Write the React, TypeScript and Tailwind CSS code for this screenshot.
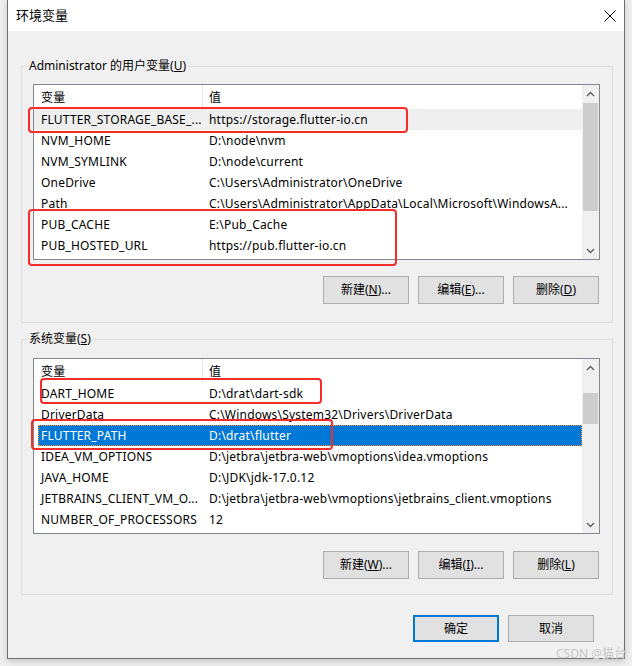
import React from "react";

type Row = { name: string; value: string };

const userRows: Row[] = [
  { name: "FLUTTER_STORAGE_BASE_...", value: "https://storage.flutter-io.cn" },
  { name: "NVM_HOME", value: "D:\\node\\nvm" },
  { name: "NVM_SYMLINK", value: "D:\\node\\current" },
  { name: "OneDrive", value: "C:\\Users\\Administrator\\OneDrive" },
  { name: "Path", value: "C:\\Users\\Administrator\\AppData\\Local\\Microsoft\\WindowsA..." },
  { name: "PUB_CACHE", value: "E:\\Pub_Cache" },
  { name: "PUB_HOSTED_URL", value: "https://pub.flutter-io.cn" },
];

const sysRows: Row[] = [
  { name: "DART_HOME", value: "D:\\drat\\dart-sdk" },
  { name: "DriverData", value: "C:\\Windows\\System32\\Drivers\\DriverData" },
  { name: "FLUTTER_PATH", value: "D:\\drat\\flutter" },
  { name: "IDEA_VM_OPTIONS", value: "D:\\jetbra\\jetbra-web\\vmoptions\\idea.vmoptions" },
  { name: "JAVA_HOME", value: "D:\\JDK\\jdk-17.0.12" },
  { name: "JETBRAINS_CLIENT_VM_O...", value: "D:\\jetbra\\jetbra-web\\vmoptions\\jetbrains_client.vmoptions" },
  { name: "NUMBER_OF_PROCESSORS", value: "12" },
];

function ArrowUp() {
  return (
    <svg width="9" height="6" viewBox="0 0 9 6">
      <polyline points="1,5 4.5,1.5 8,5" fill="none" stroke="#606060" strokeWidth="1.4" />
    </svg>
  );
}
function ArrowDown() {
  return (
    <svg width="9" height="6" viewBox="0 0 9 6">
      <polyline points="1,1 4.5,4.5 8,1" fill="none" stroke="#606060" strokeWidth="1.4" />
    </svg>
  );
}

function ListBox({
  rows,
  hover,
  selected,
  thumbTop,
  thumbHeight,
}: {
  rows: Row[];
  hover?: number;
  selected?: number;
  thumbTop: number;
  thumbHeight: number;
}) {
  return (
    <div className="flex h-[176px] w-[567px] border border-[#828790] bg-white">
      <div className="flex flex-1 flex-col overflow-hidden tracking-[0.2px]">
        <div className="flex h-[24px] items-center">
          <div className="h-full w-[169px] border-r border-[#e5e5e5] pl-[7px] pt-[1px] leading-[24px]">变量</div>
          <div className="h-full pl-[6px] pt-[1px] leading-[24px]">值</div>
        </div>
        {rows.map((r, i) => {
          const isSel = i === selected;
          const isHover = i === hover;
          return (
            <div
              key={r.name}
              className={
                "flex h-[21px] items-center whitespace-nowrap pt-[1px] " +
                (isSel
                  ? "ml-[4px] border border-dotted border-[#ff8c2a] bg-[#0078d7] text-white"
                  : isHover
                  ? "bg-[#efefef]"
                  : "")
              }
            >
              <div className={isSel ? "w-[164px] pl-[2px]" : "w-[169px] pl-[7px]"}>{r.name}</div>
              <div className="pl-[6px]">{r.value}</div>
            </div>
          );
        })}
      </div>
      <div className="flex w-[17px] flex-col bg-[#f0f0f0]">
        <div className="flex h-[17px] items-center justify-center">
          <ArrowUp />
        </div>
        <div className="flex-1">
          <div className="mx-[1px] bg-[#cdcdcd]" style={{ marginTop: thumbTop, height: thumbHeight }} />
        </div>
        <div className="flex h-[17px] items-center justify-center">
          <ArrowDown />
        </div>
      </div>
    </div>
  );
}

function Btn({ children, primary }: { children: React.ReactNode; primary?: boolean }) {
  return (
    <div
      className={
        "flex w-[86px] items-center justify-center bg-[#e1e1e1] " +
        (primary ? "h-[27px] border-2 border-[#0078d7]" : "border border-[#adadad]")
      }
    >
      {children}
    </div>
  );
}

function RedBox({ l, t, w, h }: { l: number; t: number; w: number; h: number }) {
  return (
    <div
      className="pointer-events-none absolute rounded-[4px] border-[2.5px] border-[#f52c2c]"
      style={{ left: l, top: t, width: w, height: h }}
    />
  );
}

export default function App() {
  return (
    <div className="relative h-[666px] w-[632px] overflow-hidden bg-[#eeeeee] text-[12px] text-black font-['Noto_Sans','Noto_Sans_CJK_SC',sans-serif]">
      <div className="ml-[7px] flex h-[659px] w-[618px] flex-col border-x border-b border-[#707070] bg-[#f0f0f0] shadow-[0_2px_6px_rgba(0,0,0,0.18)]">
        <div className="flex h-[31px] items-center justify-between bg-white pl-[8px] pr-[8px]">
          <span className="text-[13px]">环境变量</span>
          <svg width="12" height="12" viewBox="0 0 12 12">
            <line x1="0.5" y1="0.5" x2="11.5" y2="11.5" stroke="#000" strokeWidth="1" />
            <line x1="11.5" y1="0.5" x2="0.5" y2="11.5" stroke="#000" strokeWidth="1" />
          </svg>
        </div>

        <fieldset className="ml-[13px] mt-[27px] w-[592px] border border-[#dcdcdc] pb-[18px] pl-[11px] pr-[12px] pt-[10px]">
          <legend className="ml-[-6px] px-[2px] leading-[16px]">
            Administrator 的用户变量(<span className="underline">U</span>)
          </legend>
          <ListBox rows={userRows} hover={0} thumbTop={1} thumbHeight={108} />
          <div className="mt-[16px] flex h-[28px] justify-end gap-[9px] pr-[1px]">
            <Btn>
              新建(<span className="underline">N</span>)...
            </Btn>
            <Btn>
              编辑(<span className="underline">E</span>)...
            </Btn>
            <Btn>
              删除(<span className="underline">D</span>)
            </Btn>
          </div>
        </fieldset>

        <fieldset className="ml-[13px] mt-[8px] w-[592px] border border-[#dcdcdc] pb-[15px] pl-[11px] pr-[12px] pt-[11px]">
          <legend className="ml-[-6px] px-[2px] leading-[16px]">
            系统变量(<span className="underline">S</span>)
          </legend>
          <ListBox rows={sysRows} selected={2} thumbTop={17} thumbHeight={31} />
          <div className="mt-[17px] flex h-[28px] justify-end gap-[9px] pr-[1px]">
            <Btn>
              新建(<span className="underline">W</span>)...
            </Btn>
            <Btn>
              编辑(<span className="underline">I</span>)...
            </Btn>
            <Btn>
              删除(<span className="underline">L</span>)
            </Btn>
          </div>
        </fieldset>

        <div className="mt-[20px] flex justify-end gap-[9px] pr-[30px]">
          <Btn primary>确定</Btn>
          <div className="flex h-[27px] w-[86px] items-center justify-center border border-[#adadad] bg-[#e1e1e1]">取消</div>
        </div>
      </div>

      <RedBox l={28} t={107} w={380} h={26} />
      <RedBox l={28} t={209} w={369} h={57} />
      <RedBox l={40} t={378} w={282} h={26} />
      <RedBox l={31} t={419} w={302} h={31} />

      <div className="absolute bottom-[5px] right-[6px] text-[12px] leading-[14px] text-[#c4c4c4] [text-shadow:0_0_1px_#ffffff]">
        CSDN @猫台
      </div>
    </div>
  );
}
